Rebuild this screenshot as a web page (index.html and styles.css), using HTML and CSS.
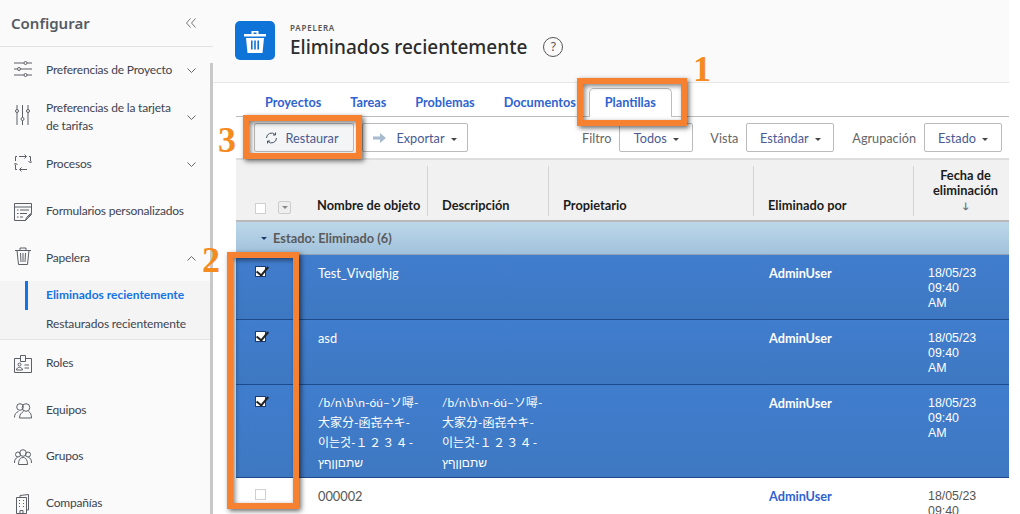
FILE: index.html
```html
<!DOCTYPE html>
<html lang="es">
<head>
<meta charset="utf-8">
<title>Eliminados recientemente</title>
<link rel="stylesheet" href="styles.css">
</head>
<body>
<div class="app">
  <aside class="sidebar">
    <div class="side-head">
      <span class="side-title">Configurar</span>
      <svg class="collapse" width="10" height="10" viewBox="0 0 10 10"><path d="M4.500 .5 .5 5l4 4.500M9.500 .5 5.500 5l4 4.500"/></svg>
    </div>
    <nav class="side-nav">
      <div class="item h-a">
        <svg class="ico up-2" width="18" height="18" viewBox="0 0 18 18"><path d="M0 3h10M13 3h5M0 9h3.500M6.500 9H18M0 15h10M13 15h5"/><circle cx="11.500" cy="3" r="1.500"/><circle cx="5" cy="9" r="1.500"/><circle cx="11.500" cy="15" r="1.500"/></svg>
        <span class="label">Preferencias de Proyecto</span>
        <svg class="chev" width="9" height="5" viewBox="0 0 9 5"><path d="M.5 .5l4 4 4-4"/></svg>
      </div>
      <div class="item h-b">
        <svg class="ico up-5" width="18" height="20" viewBox="0 0 18 20"><path d="M3 0v4.500M3 7.500V20M8.500 0v12.500M8.500 15.500V20M14 0v4.500M14 7.500V20"/><circle cx="3" cy="6" r="1.500"/><circle cx="8.500" cy="14" r="1.500"/><circle cx="14" cy="6" r="1.500"/></svg>
        <span class="label">Preferencias de la tarjeta<br>de tarifas</span>
        <svg class="chev" width="9" height="5" viewBox="0 0 9 5"><path d="M.5 .5l4 4 4-4"/></svg>
      </div>
      <div class="item h-c">
        <svg class="ico up-2" width="18" height="18" viewBox="0 0 18 18"><path d="M5 2.500h7M10.500 .5l2 2-2 2M15 2.500h1.500v5M14.500 7l2 2 2-2M13 15.500H6M7.500 13.500l-2 2 2 2M3 15.500H1.500v-5M3.500 11l-2-2-2 2M1.500 7V2.500H3"/></svg>
        <span class="label">Procesos</span>
        <svg class="chev" width="9" height="5" viewBox="0 0 9 5"><path d="M.5 .5l4 4 4-4"/></svg>
      </div>
      <div class="item h-d">
        <svg class="ico" width="18" height="18" viewBox="0 0 18 18"><path d="M.5 .5h17v10l-6 7H.5zM.5 4h17M3 7h1.500M6 7h9M3 10.500h1.500M6 10.500h7M3 14h1.500M6 14h3M11.500 17.500l1-3 4-4 1 1-4 4z"/></svg>
        <span class="label">Formularios personalizados</span>
      </div>
      <div class="item h-e">
        <svg class="ico up-3" width="18" height="18" viewBox="0 0 18 18"><path d="M1 3.500h16M6 3.500V1h6v2.500M3 3.500l1.500 14h9l1.500-14M6.500 6l.5 9M9 6v9M11.500 6l-.5 9"/></svg>
        <span class="label">Papelera</span>
        <svg class="chev" width="9" height="5" viewBox="0 0 9 5"><path d="M.5 4.500l4-4 4 4"/></svg>
      </div>
      <div class="subnav">
        <div class="sub active"><span class="sub-bar"></span>Eliminados recientemente</div>
        <div class="sub">Restaurados recientemente</div>
      </div>
      <div class="item h-f">
        <svg class="ico" width="18" height="18" viewBox="0 0 18 18"><path d="M6.500 3.500H.5v14h17v-14h-6M6.500 .5h5v6h-5z"/><circle cx="5.500" cy="9.500" r="1.500"/><path d="M2.500 15c0-3.500 6-3.500 6 0zM10.500 10h4.500M10.500 13h4.500"/></svg>
        <span class="label">Roles</span>
      </div>
      <div class="item h-g">
        <svg class="ico" width="18" height="18" viewBox="0 0 18 18"><circle cx="6" cy="5" r="3.300"/><circle cx="12" cy="5.500" r="3.800"/><path d="M.5 15.500c0-3.500 1.500-5 4-6M5.500 16c0-3.500 2-5.500 4-6.500M14.500 9.500c2 1 3 3 3 6.500h-12"/></svg>
        <span class="label">Equipos</span>
      </div>
      <div class="item h-h">
        <svg class="ico" width="18" height="18" viewBox="0 0 18 18"><circle cx="9" cy="5" r="3.300"/><circle cx="4" cy="6.500" r="2.500"/><circle cx="14" cy="6.500" r="2.500"/><path d="M4.500 16.500c0-5 2-7 4.500-7s4.500 2 4.500 7zM.5 15c0-3.500 1-5 3-5.500M17.500 15c0-3.500-1-5-3-5.500"/></svg>
        <span class="label">Grupos</span>
      </div>
      <div class="item h-i">
        <svg class="ico" width="18" height="20" viewBox="0 0 18 20"><path d="M6 3.500V1.500l8.500-1v15.500h-2M2.500 19.500v-16h10v16zM6 19.500v-3h3v3M5 6.500h1M9 6.500h1M5 9.500h1M9 9.500h1M5 12.500h1M9 12.500h1"/></svg>
        <span class="label">Compañías</span>
      </div>
    </nav>
    <div class="thumb"></div>
  </aside>

  <main class="main">
    <header class="page-head">
      <div class="page-icon">
        <svg width="24" height="24" viewBox="0 0 24 24"><path d="M1 5h22v2.500H1zM8.500 5V2h7v3h-2V3.500h-3V5zM3 9h18l-1.500 15h-15zM8 11.500v9h1.600v-9zM11.200 11.500v9h1.600v-9zM14.400 11.500v9H16v-9z" fill-rule="evenodd"/></svg>
      </div>
      <div class="page-titles">
        <div class="eyebrow">PAPELERA</div>
        <h1>Eliminados recientemente</h1>
      </div>
      <span class="help">?</span>
    </header>

    <section class="panel">
      <div class="tabs">
        <a class="tab">Proyectos</a>
        <a class="tab">Tareas</a>
        <a class="tab">Problemas</a>
        <a class="tab">Documentos</a>
        <a class="tab selected">Plantillas</a>
      </div>
      <div class="toolbar">
        <button class="btn restore">
          <svg width="13" height="12" viewBox="0 0 13 12"><path d="M1.500 6a5 5 0 0 1 8.500-3.500M11.500 6A5 5 0 0 1 3 9.500M10.500 .5v2.500H8M2.500 11.500V9H5"/></svg>
          Restaurar
        </button>
        <button class="btn export">
          <svg width="14" height="10" viewBox="0 0 14 10"><path d="M0 3.500h7V0l6 5-6 5V6.500H0z"/></svg>
          Exportar <i class="caret"></i>
        </button>
        <span class="grow"></span>
        <span class="tool-label">Filtro</span>
        <button class="btn pick w-todos">Todos <i class="caret"></i></button>
        <span class="tool-label gap-v">Vista</span>
        <button class="btn pick w-std">Estándar <i class="caret"></i></button>
        <span class="tool-label gap-a">Agrupación</span>
        <button class="btn pick w-est">Estado <i class="caret"></i></button>
      </div>
      <div class="row head">
        <div class="cell check-cell"><i class="box"></i><i class="menu-box"></i></div>
        <div class="cell">Nombre de objeto</div>
        <div class="cell sep">Descripción</div>
        <div class="cell sep">Propietario</div>
        <div class="cell sep">Eliminado por</div>
        <div class="cell sep date-head">Fecha de eliminación<span class="sort">↓</span></div>
      </div>
      <div class="group"><i class="group-caret"></i>Estado: Eliminado (6)</div>

      <div class="row sel h65">
        <div class="cell check-cell"><i class="box on"></i></div>
        <div class="cell">Test_Vivqlghjg</div>
        <div class="cell"></div><div class="cell"></div>
        <div class="cell user">AdminUser</div>
        <div class="cell date">18/05/23<br>09:40<br>AM</div>
      </div>
      <div class="row sel h65">
        <div class="cell check-cell"><i class="box on"></i></div>
        <div class="cell">asd</div>
        <div class="cell"></div><div class="cell"></div>
        <div class="cell user">AdminUser</div>
        <div class="cell date">18/05/23<br>09:40<br>AM</div>
      </div>
      <div class="row sel h93">
        <div class="cell check-cell"><i class="box on"></i></div>
        <div class="cell multi">/b/n\b\n-óú–ソ噚-<br>大家分-函㐂수キ-<br>이는것-<span class="fw">１２３４</span>-<br><span dir="rtl">שתםןןףץ</span></div>
        <div class="cell multi">/b/n\b\n-óú–ソ噚-<br>大家分-函㐂수キ-<br>이는것-<span class="fw">１２３４</span>-<br><span dir="rtl">שתםןןףץ</span></div>
        <div class="cell"></div>
        <div class="cell user">AdminUser</div>
        <div class="cell date">18/05/23<br>09:40<br>AM</div>
      </div>
      <div class="row plain">
        <div class="cell check-cell"><i class="box"></i></div>
        <div class="cell">000002</div>
        <div class="cell"></div><div class="cell"></div>
        <div class="cell user">AdminUser</div>
        <div class="cell date">18/05/23<br>09:40</div>
      </div>
    </section>
  </main>

  <div class="callout c1"></div><div class="num n1">1</div>
  <div class="callout c2"></div><div class="num n2">2</div>
  <div class="callout c3"></div><div class="num n3">3</div>
</div>
</body>
</html>
```
FILE: styles.css
```css
* { box-sizing: border-box; }
html, body { margin: 0; height: 100%; overflow: hidden; background: #fff; }
body { font-family: "Lato", sans-serif; color: #4b4b4b; }
.app { position: relative; width: 1020px; height: 514px; overflow: hidden; display: flex; background: #fff; }

.sidebar { position: relative; width: 213px; flex: none; height: 514px; background: #fafafa; }
.thumb { position: absolute; right: 0; top: 63px; bottom: 0; width: 3px; background: #c8c8c8; }
.side-head { height: 47px; display: flex; align-items: center; justify-content: space-between; padding: 0 17px 0 11px; border-bottom: 1px solid #e2e2e2; }
.side-title { font-family: "Noto Sans", sans-serif; font-size: 15px; font-weight: 600; color: #555b63; }
.collapse path { fill: none; stroke: #777; stroke-width: 1; }
.item { display: flex; align-items: center; padding: 0 17px 0 14px; color: #3d4450; font-size: 12px; letter-spacing: -.2px; line-height: 18px; }
.ico { flex: none; margin-right: 14px; fill: none; stroke: #5c5f66; stroke-width: 1; }
.up-2 { margin-bottom: 4px; }
.up-3 { margin-bottom: 6px; }
.up-5 { margin-bottom: 5px; }
.label { flex: 1; margin-bottom: 2px; }
.chev { flex: none; fill: none; stroke: #666; stroke-width: 1; }
.h-a, .h-b, .h-c, .h-d, .h-e, .h-f, .h-g, .h-h, .h-i { height: 47px; }
.h-h { height: 46px; }
.subnav { background: #f4f4f4; border-bottom: 1px solid #e4e4e4; height: 59px; margin: -1px 3px 0 0; }
.sub { position: relative; height: 29px; padding-left: 46px; font-size: 12px; letter-spacing: -.15px; line-height: 28px; color: #3d4450; }
.sub.active { color: #1473e6; font-weight: 700; letter-spacing: 0; }
.sub-bar { position: absolute; left: 25px; top: 0; width: 3px; height: 29px; background: #1473e6; }

.main { flex: 1; min-width: 0; padding-right: 11px; }
.page-head { height: 83px; padding: 21px 0 0 22px; background: #fafafa; border-bottom: 1px solid #e6e6e6; display: flex; align-items: flex-start; font-family: "Noto Sans", sans-serif; }
.page-icon { width: 40px; height: 39px; background: #0f74d8; border-radius: 5px; display: flex; align-items: center; justify-content: center; }
.page-icon svg { fill: #fff; }
.page-titles { margin-left: 15px; }
.eyebrow { font-size: 8px; font-weight: 600; letter-spacing: .8px; line-height: 10px; margin-top: 2px; color: #555; }
h1 { margin: 1px 0 0; font-size: 19px; line-height: 26px; font-weight: 500; color: #2c2c2c; white-space: nowrap; }
.help { margin: 16px 0 0 16px; width: 20px; height: 20px; border: 1px solid #555; border-radius: 50%; font-size: 12px; line-height: 18px; text-align: center; color: #555; }

.panel { margin-left: 23px; font-size: 12.800px; }
.tabs { height: 34px; display: flex; padding-left: 29px; border-bottom: 1px solid #bdbdbd; align-items: flex-end; }
.tab { color: #2f63cf; font-weight: 700; font-size: 12.700px; line-height: 13px; padding-bottom: 7px; margin-right: 29px; }
.tab.selected { height: 29px; margin: 0 0 -1px -16px; padding: 7px 15px 0; background: #fff; border: 1px solid #bdbdbd; border-bottom: 0; border-radius: 5px 5px 0 0; }

.toolbar { height: 43px; display: flex; align-items: center; padding: 0 7px 0 18px; border-bottom: 2px solid #ddd; background: #fff; }
.btn { height: 29px; margin: 0; border: 1px solid #bbb; border-radius: 2px; background: #fff; font: 12.700px "Lato", sans-serif; color: #4a5a92; display: inline-flex; align-items: center; justify-content: center; gap: 5px; padding: 0; }
.restore { width: 100px; padding-right: 4px; background: #f4f5f7; }
.restore svg { fill: none; stroke: #456; stroke-width: 1; margin-right: 2px; }
.export { width: 106px; margin-left: 8px; }
.export svg { fill: #a9bbcf; margin-right: 4px; }
.caret { display: inline-block; width: 0; height: 0; margin: 3px 0 0 1px; border: 3px solid transparent; border-top: 3px solid #444; border-bottom: 0; }
.grow { flex: 1; }
.tool-label { color: #666; font-size: 12.700px; margin-right: 8px; }
.gap-v { margin-left: 17px; }
.gap-a { margin-left: 18px; }
.w-todos { width: 74px; }
.w-std { width: 88px; }
.w-est { width: 78px; }

.row { display: grid; grid-template-columns: 67px 124px 121px 205px 160px 96px; }
.row .cell { padding: 10px 8px 0 15px; }
.head { height: 62px; background: #f1f1f1; border-bottom: 2px solid #b9b9b9; color: #1c1c1c; font-weight: 700; }
.head .cell { padding: 0 0 3px 14px; align-self: stretch; display: flex; align-items: flex-end; position: relative; margin: 6px 0 4px; white-space: nowrap; }
.head .sep { border-left: 1px solid #d4d4d4; }
.head .date-head { display: block; padding: 2px 0 0 8px; text-align: center; line-height: 15px; white-space: normal; }
.sort { display: block; color: #666; font-size: 9px; line-height: 15px; }
.head .check-cell { padding: 0 0 2px 19px; gap: 12px; }
.box { display: block; width: 11px; height: 11px; background: #fff; border: 1px solid #d0d0d0; position: relative; }
.box.on { border-color: #1d3a6c; }
.box.on::after { content: ""; position: absolute; left: 3px; top: -3px; width: 5px; height: 10px; border: solid #222; border-width: 0 2px 2px 0; transform: rotate(40deg); }
.menu-box { display: block; width: 13px; height: 13px; background: #eee; border: 1px solid #ccc; border-radius: 2px; position: relative; }
.menu-box::after { content: ""; position: absolute; left: 3px; top: 4px; border: 3px solid transparent; border-top: 3px solid #888; border-bottom: 0; }

.group { height: 33px; padding-left: 25px; display: flex; align-items: center; background: linear-gradient(#bcd7e9, #a2c2dc); border-bottom: 1px solid #8da4b8; color: #5a5a5a; font-weight: 700; }
.group-caret { margin-right: 6px; border: 3px solid transparent; border-top: 3px solid #1d3a6c; border-bottom: 0; }

.sel { background: linear-gradient(#407dcd, #3e78c2); color: #fff; border-bottom: 1px solid #1d4a8a; }
.h65 { height: 65px; }
.h93 { height: 93px; }
.plain { height: 60px; background: #fff; color: #555; }
.row .check-cell { padding-left: 19px; padding-top: 11px; }
.row .user { font-weight: 700; font-size: 12.700px; padding-left: 16px; }
.plain .user { color: #2f63cf; }
.row .date { font-family: "Liberation Sans", sans-serif; font-size: 12.400px; line-height: 15px; padding-top: 11px; padding-right: 0; white-space: nowrap; }
.row .multi { font-family: "Lato", "Noto Sans CJK SC", "Noto Sans CJK KR", "Liberation Sans", sans-serif; font-size: 12px; line-height: 20px; padding-top: 8px; padding-right: 0; white-space: nowrap; }
.fw { letter-spacing: 1.300px; }

.callout { position: absolute; border: 6px solid #f58131; box-shadow: 2px 2px 5px rgba(0,0,0,.6), inset 2px 2px 5px rgba(0,0,0,.5); }
.c1 { left: 577px; top: 78px; width: 110px; height: 48px; }
.c2 { left: 227px; top: 252px; width: 72px; height: 257px; }
.c3 { left: 243px; top: 115px; width: 119px; height: 44px; }
.num { position: absolute; font-family: "Liberation Serif", serif; font-weight: 700; font-size: 36px; line-height: 36px; color: #f58a1f; }
.n1 { left: 693px; top: 51px; }
.n2 { left: 202px; top: 242px; }
.n3 { left: 218px; top: 122px; }
```
